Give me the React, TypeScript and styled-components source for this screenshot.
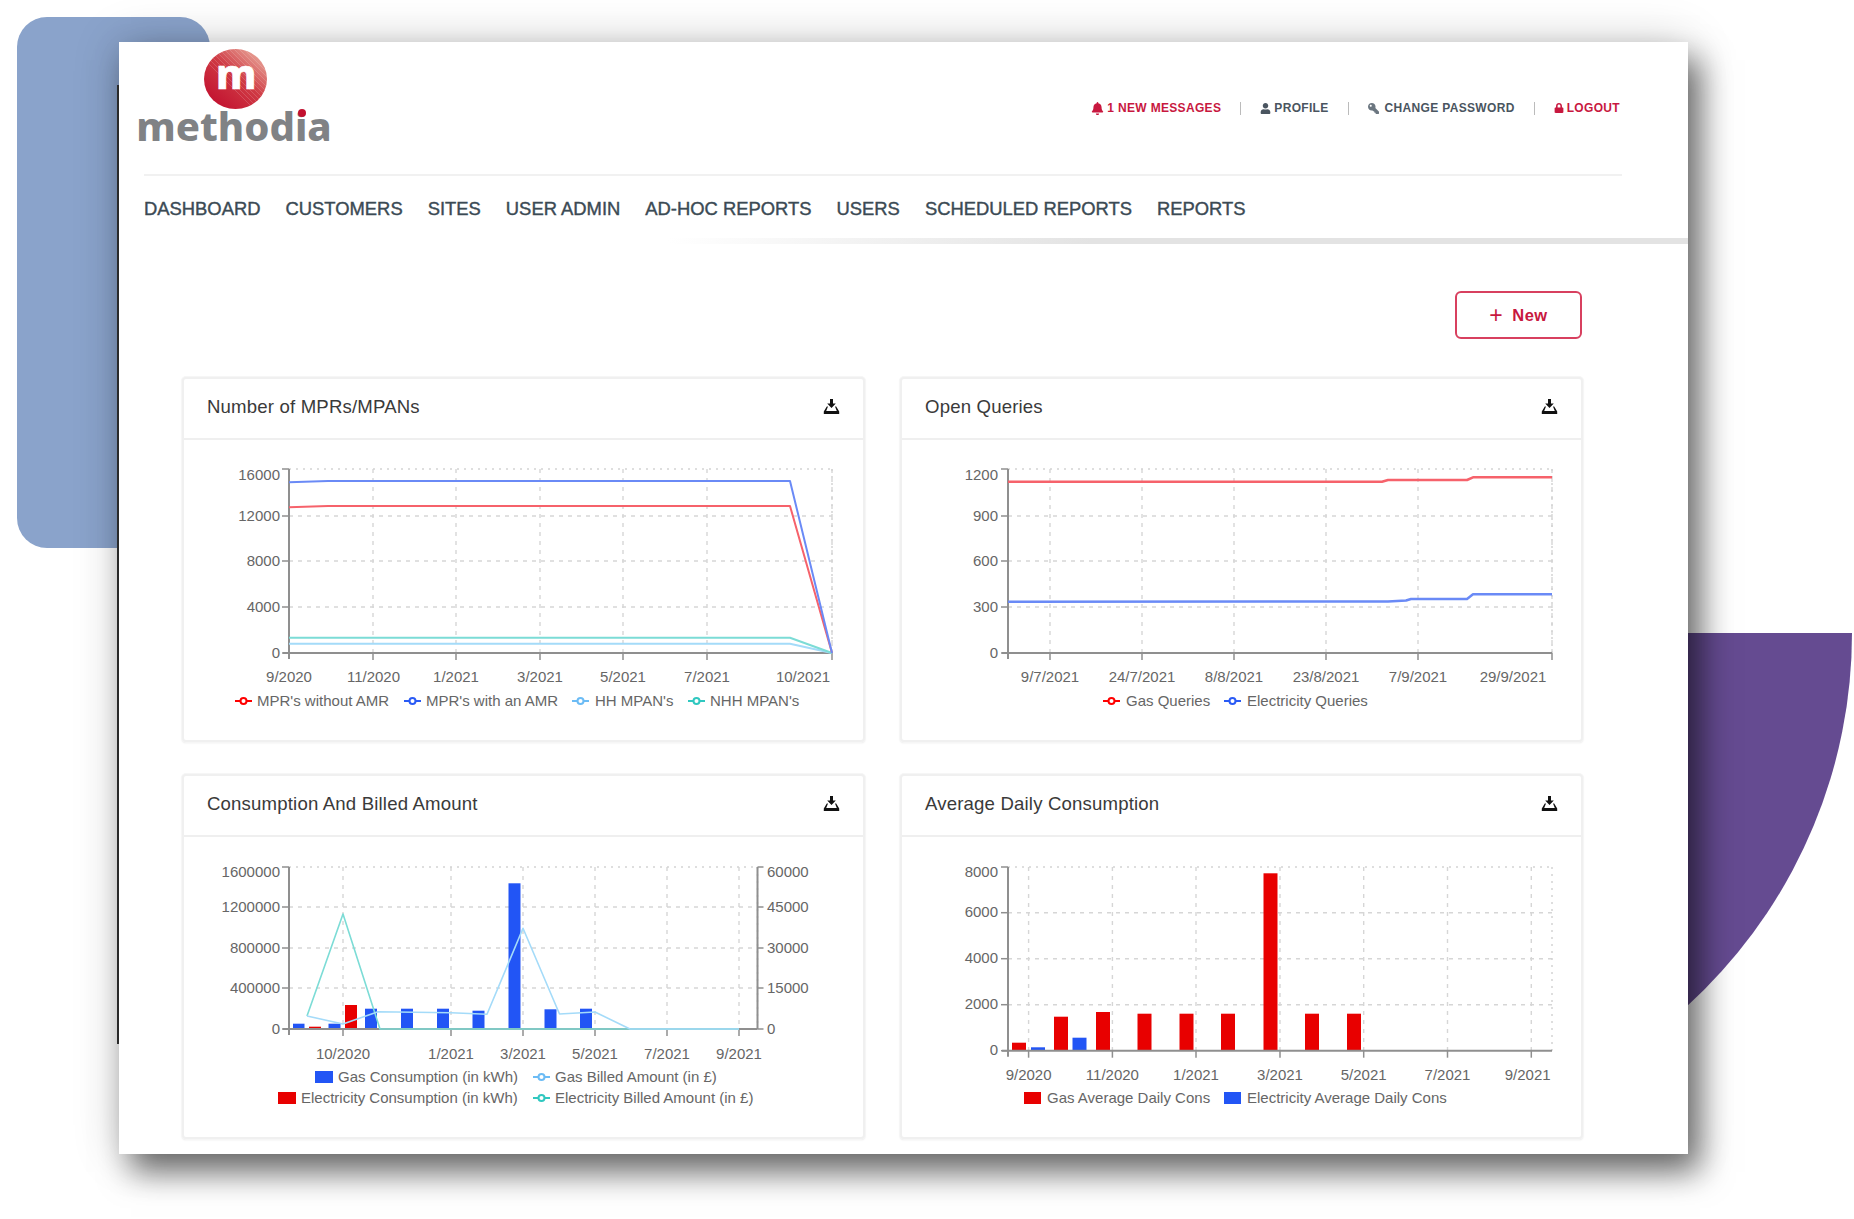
import styled, { createGlobalStyle } from 'styled-components';
import { FaBell, FaUser, FaKey, FaLock } from 'react-icons/fa';

const GlobalStyle = createGlobalStyle`
  html, body {
    margin: 0;
    padding: 0;
    background: #fff;
  }
  body {
    font-family: "Liberation Sans", Arial, sans-serif;
  }
`;

type Anchor = 'start' | 'middle' | 'end';
type Tick = { y: number; label: string; labelY?: number };
type XLabel = { x: number; text: string; anchor?: Anchor };
type Bar = { x: number; w: number; top: number; color: string };
type Line = { color: string; points: string; width?: number };
type LegendItem = { kind: 'line' | 'rect'; color: string; x: number; y: number; w: number; textX: number; text: string };
type ChartData = {
  box: { x: number; y: number; w: number; h: number };
  left: number;
  right: number;
  top: number;
  bottom: number;
  yTicks: Tick[];
  labelEnd: number;
  rightAxis?: { x: number; labelX: number; labels: string[] };
  xGrid: number[];
  xLabels: XLabel[];
  labelY: number;
  bars?: Bar[];
  lines?: Line[];
  legend: LegendItem[];
};

const RED = '#e80000';
const BLUE = '#2255f5';
const L_RED = '#f6626b';
const L_BLUE = '#6a8af6';
const L_SKY = '#a4dbf9';
const L_TEAL = '#7cdcd6';

const chart1: ChartData = {
  box: { x: 184, y: 440, w: 679, h: 300 },
  left: 289,
  right: 832,
  top: 469,
  bottom: 653,
  labelEnd: 280,
  yTicks: [
    { y: 469, label: '16000', labelY: 475 },
    { y: 516, label: '12000' },
    { y: 561, label: '8000' },
    { y: 607, label: '4000' },
    { y: 653, label: '0' },
  ],
  xGrid: [373, 456, 540, 623, 707, 832],
  xLabels: [
    { x: 289, text: '9/2020' },
    { x: 373.5, text: '11/2020' },
    { x: 456, text: '1/2021' },
    { x: 540, text: '3/2021' },
    { x: 623, text: '5/2021' },
    { x: 707, text: '7/2021' },
    { x: 803, text: '10/2021' },
  ],
  labelY: 677,
  lines: [
    { color: L_SKY, points: '289,643.7 790,643.7 832,653' },
    { color: L_TEAL, points: '289,637.7 790,637.7 832,653' },
    { color: L_RED, points: '289,507.3 328,506 790,506 832,653' },
    { color: L_BLUE, points: '289,482.3 328,481 790,481 832,653' },
  ],
  legend: [
    { kind: 'line', color: '#f00', x: 235, y: 701, w: 17, textX: 257, text: "MPR's without AMR" },
    { kind: 'line', color: '#2a5bf5', x: 404, y: 701, w: 17, textX: 426, text: "MPR's with an AMR" },
    { kind: 'line', color: '#6cbcf5', x: 572, y: 701, w: 17, textX: 595, text: "HH MPAN's" },
    { kind: 'line', color: '#30c8c0', x: 688, y: 701, w: 17, textX: 710, text: "NHH MPAN's" },
  ],
};

const chart2: ChartData = {
  box: { x: 902, y: 440, w: 679, h: 300 },
  left: 1008,
  right: 1552,
  top: 469,
  bottom: 653,
  labelEnd: 998,
  yTicks: [
    { y: 469, label: '1200', labelY: 475 },
    { y: 516, label: '900' },
    { y: 561, label: '600' },
    { y: 607, label: '300' },
    { y: 653, label: '0' },
  ],
  xGrid: [1050, 1142, 1234, 1326, 1418, 1552],
  xLabels: [
    { x: 1050, text: '9/7/2021' },
    { x: 1142, text: '24/7/2021' },
    { x: 1234, text: '8/8/2021' },
    { x: 1326, text: '23/8/2021' },
    { x: 1418, text: '7/9/2021' },
    { x: 1513, text: '29/9/2021' },
  ],
  labelY: 677,
  lines: [
    { color: L_RED, width: 2.5, points: '1008,481.7 1382,481.7 1388,480 1467,480 1473,477.3 1552,477.3' },
    { color: L_BLUE, width: 2.5, points: '1008,601.7 1388,601.5 1406,600.5 1411,599 1467,599 1473,594.3 1552,594.3' },
  ],
  legend: [
    { kind: 'line', color: '#f00', x: 1103, y: 701, w: 17, textX: 1126, text: 'Gas Queries' },
    { kind: 'line', color: '#2a5bf5', x: 1224, y: 701, w: 17, textX: 1247, text: 'Electricity Queries' },
  ],
};

const chart3: ChartData = {
  box: { x: 184, y: 837, w: 679, h: 300 },
  left: 289,
  right: 757.5,
  top: 867,
  bottom: 1029,
  labelEnd: 280,
  yTicks: [
    { y: 867, label: '1600000', labelY: 872 },
    { y: 907, label: '1200000' },
    { y: 948, label: '800000' },
    { y: 988, label: '400000' },
    { y: 1029, label: '0' },
  ],
  rightAxis: { x: 757.5, labelX: 767, labels: ['60000', '45000', '30000', '15000', '0'] },
  xGrid: [343, 451, 523, 595, 667, 739],
  xLabels: [
    { x: 343, text: '10/2020' },
    { x: 451, text: '1/2021' },
    { x: 523, text: '3/2021' },
    { x: 595, text: '5/2021' },
    { x: 667, text: '7/2021' },
    { x: 739, text: '9/2021' },
  ],
  labelY: 1054,
  bars: [
    { x: 293, w: 11.5, top: 1023.7, color: BLUE },
    { x: 309, w: 12, top: 1026.7, color: RED },
    { x: 328.5, w: 12, top: 1023.7, color: BLUE },
    { x: 345, w: 12, top: 1005, color: RED },
    { x: 365, w: 12, top: 1008.7, color: BLUE },
    { x: 401, w: 12, top: 1008.7, color: BLUE },
    { x: 437, w: 12, top: 1008.7, color: BLUE },
    { x: 472.5, w: 12, top: 1010.7, color: BLUE },
    { x: 508.5, w: 12, top: 883.3, color: BLUE },
    { x: 544.5, w: 12, top: 1009.3, color: BLUE },
    { x: 580, w: 12, top: 1008.7, color: BLUE },
  ],
  lines: [
    { color: L_TEAL, width: 1.6, points: '307,1016 343,914 380,1029 739,1029' },
    {
      color: L_SKY,
      width: 1.6,
      points: '307,1016 343,1024 378,1011.7 451,1012.7 487,1014.3 523,928.3 559.5,1014 595,1012 630,1029 739,1029',
    },
  ],
  legend: [
    { kind: 'rect', color: BLUE, x: 315, y: 1077, w: 18, textX: 338, text: 'Gas Consumption (in kWh)' },
    { kind: 'line', color: '#6cbcf5', x: 533, y: 1077, w: 17, textX: 555, text: 'Gas Billed Amount (in £)' },
    { kind: 'rect', color: RED, x: 278, y: 1098, w: 18, textX: 301, text: 'Electricity Consumption (in kWh)' },
    { kind: 'line', color: '#30c8c0', x: 533, y: 1098, w: 17, textX: 555, text: 'Electricity Billed Amount (in £)' },
  ],
};

const chart4: ChartData = {
  box: { x: 902, y: 837, w: 679, h: 300 },
  left: 1008,
  right: 1552,
  top: 867,
  bottom: 1050.7,
  labelEnd: 998,
  yTicks: [
    { y: 867, label: '8000', labelY: 872 },
    { y: 912.7, label: '6000' },
    { y: 958.7, label: '4000' },
    { y: 1004.7, label: '2000' },
    { y: 1050.7, label: '0' },
  ],
  xGrid: [1028.6, 1112.4, 1196, 1280, 1363.7, 1447.5, 1531.3],
  xLabels: [
    { x: 1028.6, text: '9/2020' },
    { x: 1112.4, text: '11/2020' },
    { x: 1196, text: '1/2021' },
    { x: 1280, text: '3/2021' },
    { x: 1363.7, text: '5/2021' },
    { x: 1447.5, text: '7/2021' },
    { x: 1527.7, text: '9/2021' },
  ],
  labelY: 1075,
  bars: [
    { x: 1012, w: 14, top: 1042.7, color: RED },
    { x: 1031, w: 14, top: 1047.3, color: BLUE },
    { x: 1054, w: 14, top: 1016.7, color: RED },
    { x: 1072.5, w: 14, top: 1037.7, color: BLUE },
    { x: 1096, w: 14, top: 1012, color: RED },
    { x: 1137.5, w: 14, top: 1013.7, color: RED },
    { x: 1179.5, w: 14, top: 1013.7, color: RED },
    { x: 1221, w: 14, top: 1013.7, color: RED },
    { x: 1263.5, w: 14, top: 873.3, color: RED },
    { x: 1305, w: 14, top: 1013.7, color: RED },
    { x: 1347, w: 14, top: 1013.7, color: RED },
  ],
  legend: [
    { kind: 'rect', color: RED, x: 1024, y: 1098, w: 17, textX: 1047, text: 'Gas Average Daily Cons' },
    { kind: 'rect', color: BLUE, x: 1224, y: 1098, w: 17, textX: 1247, text: 'Electricity Average Daily Cons' },
  ],
};

const cards = [
  { title: 'Number of MPRs/MPANs', chart: chart1 },
  { title: 'Open Queries', chart: chart2 },
  { title: 'Consumption And Billed Amount', chart: chart3 },
  { title: 'Average Daily Consumption', chart: chart4 },
];

const navItems = ['DASHBOARD', 'CUSTOMERS', 'SITES', 'USER ADMIN', 'AD-HOC REPORTS', 'USERS', 'SCHEDULED REPORTS', 'REPORTS'];

function Chart({ data }: { data: ChartData }) {
  const { box, left, right, top, bottom } = data;
  return (
    <ChartSvg width={box.w} height={box.h} viewBox={`${box.x} ${box.y} ${box.w} ${box.h}`}>
      {/* grid */}
      {data.yTicks.slice(1, -1).map((t) => (
        <GridLine key={t.label} x1={left} x2={right} y1={t.y} y2={t.y} />
      ))}
      {data.xGrid.map((x) => (
        <GridLine key={x} x1={x} x2={x} y1={top} y2={bottom} />
      ))}
      <EdgeLine x1={left} x2={right} y1={top} y2={top} />
      <EdgeLine x1={right} x2={right} y1={top} y2={bottom} />

      {data.bars?.map((b) => (
        <rect key={b.x} x={b.x} y={b.top} width={b.w} height={bottom - b.top} fill={b.color} />
      ))}

      {/* axes */}
      <AxisLine x1={left} x2={left} y1={top} y2={bottom + 6} />
      <AxisLine x1={left - 6} x2={right} y1={bottom} y2={bottom} />
      {data.yTicks.map((t) => (
        <g key={t.label}>
          <TickLine x1={left - 7} x2={left} y1={t.y} y2={t.y} />
          <AxisText x={data.labelEnd} y={(t.labelY ?? t.y) - 1} textAnchor='end' dominantBaseline='central'>
            {t.label}
          </AxisText>
        </g>
      ))}
      {data.xGrid.map((x) => (
        <TickLine key={x} x1={x} x2={x} y1={bottom} y2={bottom + 7} />
      ))}
      {data.rightAxis && (
        <>
          <AxisLine x1={data.rightAxis.x} x2={data.rightAxis.x} y1={top} y2={bottom} />
          {data.yTicks.map((t, i) => (
            <g key={t.y}>
              <TickLine x1={data.rightAxis!.x} x2={data.rightAxis!.x + 6} y1={t.y} y2={t.y} />
              <AxisText x={data.rightAxis!.labelX} y={(t.labelY ?? t.y) - 1} dominantBaseline='central'>
                {data.rightAxis!.labels[i]}
              </AxisText>
            </g>
          ))}
        </>
      )}
      {data.xLabels.map((l) => (
        <AxisText key={l.text} x={l.x} y={data.labelY - 1} textAnchor={l.anchor ?? 'middle'} dominantBaseline='central'>
          {l.text}
        </AxisText>
      ))}

      {data.lines?.map((l) => (
        <polyline key={l.points} points={l.points} fill='none' stroke={l.color} strokeWidth={l.width ?? 2} strokeLinejoin='round' />
      ))}

      {/* legend */}
      {data.legend.map((item) => (
        <g key={item.text}>
          {item.kind === 'rect' ? (
            <rect x={item.x} y={item.y - 6} width={item.w} height={12} fill={item.color} />
          ) : (
            <>
              <line x1={item.x} x2={item.x + item.w} y1={item.y} y2={item.y} stroke={item.color} strokeWidth={2} />
              <circle cx={item.x + item.w / 2} cy={item.y} r={3} fill='#fff' stroke={item.color} strokeWidth={2} />
            </>
          )}
          <LegendText x={item.textX} y={item.y - 1} dominantBaseline='central'>
            {item.text}
          </LegendText>
        </g>
      ))}
    </ChartSvg>
  );
}

function LogoMark() {
  return (
    <LogoCircle width='63' height='60' viewBox='0 0 63 60'>
      <defs>
        <linearGradient id='logoRed' x1='0.15' y1='0.95' x2='0.9' y2='0.1'>
          <stop offset='0' stopColor='#c2102f' />
          <stop offset='0.55' stopColor='#cf3a44' />
          <stop offset='1' stopColor='#e8a598' />
        </linearGradient>
        <clipPath id='logoClip'>
          <ellipse cx='31.5' cy='30' rx='31.5' ry='30' />
        </clipPath>
      </defs>
      <ellipse cx='31.5' cy='30' rx='31.5' ry='30' fill='url(#logoRed)' />
      <g clipPath='url(#logoClip)' stroke='#fff' strokeOpacity='0.16' strokeWidth='1'>
        {[-12, -7, -2, 3, 8, 13, 18, 23, 28, 33, 38].map((d) => (
          <line key={d} x1={d} y1='-2' x2={d + 64} y2='62' />
        ))}
      </g>
      <LogoLetter x='12' y='39.5'>
        m
      </LogoLetter>
    </LogoCircle>
  );
}

function DownloadIcon() {
  return (
    <IconSvg width='17' height='16' viewBox='0 0 17 16'>
      <path d='M7 0 H10 V4.500 H12.800 L8.500 9 L4.200 4.500 H7 Z' fill='#111' />
      <path d='M3.800 7.500 L0.800 12.500 V15 H16.200 V12.500 L13.200 7.500 H12 L13.800 12 H3.200 L5 7.500 Z' fill='#111' />
    </IconSvg>
  );
}

export default function App() {
  return (
    <Page>
      <GlobalStyle />
      <BlueShape />
      <PurpleShape />
      <Screen>
        <TopBar>
          <Logo>
            <LogoMark />
            <LogoWord>
              methodia
              <LogoDot />
            </LogoWord>
          </Logo>
          <TopLinks>
            <TopLink $alert>
              <FaBell size={13} />1 NEW MESSAGES
            </TopLink>
            <TopSep />
            <TopLink>
              <FaUser size={11} />
              PROFILE
            </TopLink>
            <TopSep />
            <TopLink>
              <KeyIcon size={11} />
              CHANGE PASSWORD
            </TopLink>
            <TopSep />
            <TopLink $alert>
              <FaLock size={10} />
              LOGOUT
            </TopLink>
          </TopLinks>
        </TopBar>
        <Divider />
        <Nav>
          {navItems.map((item) => (
            <NavItem key={item}>{item}</NavItem>
          ))}
        </Nav>
        <NavRule />
        <ActionRow>
          <NewButton>
            <span>+</span>New
          </NewButton>
        </ActionRow>
        <CardGrid>
          {cards.map((c) => (
            <Card key={c.title}>
              <CardHeader>
                <CardTitle>{c.title}</CardTitle>
                <DownloadIcon />
              </CardHeader>
              <Chart data={c.chart} />
            </Card>
          ))}
        </CardGrid>
      </Screen>
    </Page>
  );
}

const Page = styled.div`
  position: relative;
  width: 1854px;
  height: 1219px;
  overflow: hidden;
  background: #fff;
  padding: 42px 0 0 119px;
  box-sizing: border-box;
`;

const BlueShape = styled.div`
  position: absolute;
  left: 17px;
  top: 17px;
  width: 193px;
  height: 531px;
  background: #8aa3cb;
  border-radius: 30px;
`;

const PurpleShape = styled.div`
  position: absolute;
  left: 1348px;
  top: 633px;
  width: 504px;
  height: 504px;
  background: #654b91;
  border-bottom-right-radius: 100%;
`;

const Screen = styled.div`
  position: relative;
  width: 1569px;
  height: 1112px;
  background: #fff;
  box-shadow: 12px 18px 30px rgba(0, 0, 0, 0.55), 0 0 44px rgba(0, 0, 0, 0.18);

  &::before {
    content: '';
    position: absolute;
    left: -2px;
    top: 43px;
    bottom: 110px;
    width: 2px;
    background: #2a2a2a;
  }
`;

const TopBar = styled.div`
  height: 132px;
  display: flex;
  justify-content: space-between;
  align-items: flex-start;
  padding: 7px 68px 0 18px;
  box-sizing: border-box;
`;

const Logo = styled.div`
  position: relative;
  width: 194px;
  display: flex;
  flex-direction: column;
  align-items: center;
`;

const LogoCircle = styled.svg`
  display: block;
  margin-left: 3px;
  overflow: visible;
`;

const LogoLetter = styled.text`
  font-family: 'Noto Sans', sans-serif;
  font-weight: 800;
  font-size: 41px;
  fill: #fff;
  stroke: #fff;
  stroke-width: 0.6;
`;

const LogoWord = styled.div`
  position: relative;
  font-family: 'Noto Sans', sans-serif;
  font-weight: 800;
  font-size: 40px;
  line-height: 36px;
  margin-top: -1px;
  color: #808285;
  white-space: nowrap;
`;

const LogoDot = styled.span`
  position: absolute;
  left: 162px;
  top: 1px;
  width: 8px;
  height: 8px;
  border-radius: 50%;
  background: #c2102f;
`;

const TopLinks = styled.div`
  display: flex;
  align-items: center;
  gap: 19px;
  margin-top: 52px;
  height: 14px;
`;

const TopLink = styled.a<{ $alert?: boolean }>`
  display: flex;
  align-items: center;
  gap: 3px;
  font-size: 12px;
  font-weight: 700;
  letter-spacing: 0.33px;
  white-space: nowrap;
  color: ${({ $alert }) => ($alert ? '#c8183f' : '#4a5560')};
`;

const KeyIcon = styled(FaKey)`
  color: #6b7680;
  transform: scaleX(-1);
  margin: 0 3px 0 0;
`;

const TopSep = styled.span`
  width: 1px;
  height: 13px;
  background: #bbb;
`;

const Divider = styled.div`
  height: 2px;
  margin: 0 66px 0 25px;
  background: #f1f1f1;
`;

const Nav = styled.nav`
  height: 62px;
  box-sizing: border-box;
  display: flex;
  align-items: center;
  gap: 25px;
  padding: 4px 0 0 25px;
`;

const NavItem = styled.a`
  font-size: 18.4px;
  color: #3b4a54;
  -webkit-text-stroke: 0.4px #3b4a54;
  white-space: nowrap;
`;

const NavRule = styled.div`
  height: 6px;
  background: linear-gradient(90deg, #fff 35%, #e3e3e3 62%, #e3e3e3 100%);
`;

const ActionRow = styled.div`
  display: flex;
  justify-content: flex-end;
  padding: 47px 106px 0 0;
`;

const NewButton = styled.button`
  width: 127px;
  height: 48px;
  display: flex;
  align-items: center;
  justify-content: center;
  gap: 9px;
  background: #fff;
  border: 2px solid #d8405f;
  border-radius: 6px;
  font-family: 'Liberation Sans', Arial, sans-serif;
  font-size: 16.5px;
  font-weight: 700;
  letter-spacing: 0.5px;
  color: #c8183f;

  span {
    font-size: 23px;
    font-weight: 400;
    line-height: 1;
  }
`;

const CardGrid = styled.div`
  display: grid;
  grid-template-columns: 683px 683px;
  column-gap: 35px;
  row-gap: 32px;
  margin-top: 38px;
  padding-left: 63px;
`;

const Card = styled.section`
  width: 683px;
  height: 365px;
  box-sizing: border-box;
  border: 2px solid #f0f0f0;
  border-radius: 4px;
  background: #fff;
  box-shadow: 0 0 0 1px #f6f6f6, 0 1px 2px rgba(0, 0, 0, 0.1);
`;

const CardHeader = styled.header`
  height: 61px;
  box-sizing: border-box;
  display: flex;
  align-items: center;
  justify-content: space-between;
  padding: 0 23px 3px 23px;
  border-bottom: 2px solid #efefef;
`;

const CardTitle = styled.h3`
  margin: 0;
  font-size: 18.6px;
  font-weight: 400;
  letter-spacing: 0.17px;
  color: #3a3a3a;
`;

const IconSvg = styled.svg`
  display: block;
`;

const ChartSvg = styled.svg`
  display: block;
`;

const GridLine = styled.line`
  stroke: #d6d6d6;
  stroke-width: 1.4;
  stroke-dasharray: 4 5;
`;

const EdgeLine = styled.line`
  stroke: #d4d4d4;
  stroke-width: 1.5;
  stroke-dasharray: 2 5;
`;

const AxisLine = styled.line`
  stroke: #8f8f8f;
  stroke-width: 2;
`;

const TickLine = styled.line`
  stroke: #8f8f8f;
  stroke-width: 1.5;
`;

const AxisText = styled.text`
  font-size: 15px;
  fill: #666;
`;

const LegendText = styled.text`
  font-size: 15px;
  fill: #666;
`;
